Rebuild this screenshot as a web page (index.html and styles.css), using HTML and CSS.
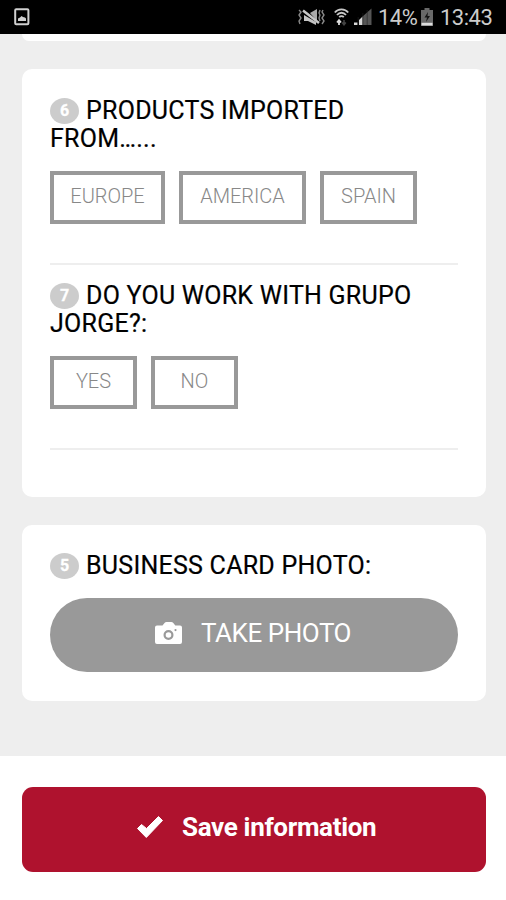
FILE: index.html
```html
<!DOCTYPE html>
<html lang="en">
<head>
    <meta charset="UTF-8">
    <meta name="viewport" content="width=device-width, initial-scale=1.0">
    <title>Questionnaire</title>
    <link rel="stylesheet" href="styles.css">
</head>
<body>
    <header class="status-bar">
        <svg class="icon-picture" width="16" height="18" viewBox="0 0 16 18">
            <rect x="1.2" y="1.2" width="13.2" height="15" rx="1" fill="none" stroke="#d0d0d0" stroke-width="2"/>
            <path d="M4 13V10.500l2-1 1.500-1.500L9 9l2 .5 1 1V13z" fill="#d0d0d0"/>
        </svg>
        <div class="status-right">
            <svg class="icon-mute" width="27" height="18" viewBox="0 0 27 18">
                <path d="M12 5l7-4v12z" fill="#aaa"/>
                <path d="M6 7v6h4l8 4v-3z" fill="#c4c4c4"/>
                <path d="M5 2.500l16 12.500" stroke="#c8c8c8" stroke-width="2.500"/>
                <path d="M1 2l2 2-2 3 2 3-2 3 1 3M22 2l-1 3 1 2-1 3 1 3M25 2l-1 2 2 3-2 3 2 3-2 3" fill="none" stroke="#888" stroke-width="1.400"/>
            </svg>
            <svg class="icon-wifi" width="15" height="18" viewBox="0 0 15 18">
                <path d="M.8 4.500C4 .3 11 .3 14.200 4.500M3 7c2.500-3 6.500-3 9 0M5.200 9.200c1.400-1.500 3.200-1.500 4.600 0" fill="none" stroke="#c8c8c8" stroke-width="1.800"/>
                <path d="M5 12v5M3 14.500L5 12.200l2 2.300" fill="none" stroke="#ddd" stroke-width="1.800"/>
                <path d="M10 12v5M8.200 14.500l1.800 2.300 1.800-2.300" fill="none" stroke="#444" stroke-width="1.500"/>
            </svg>
            <svg class="icon-signal" width="18" height="17" viewBox="0 0 18 17">
                <path d="M8.500 8.500L17.500.5V17h-9z" fill="#555"/>
                <path d="M0 17v-2.500h3.500V17zM5 17v-5l3.500-3.500V17z" fill="#d8d8d8"/>
                <path d="M4.200 9v8M8.900 5v12M13.200 2v15" stroke="#222" stroke-width=".6"/>
            </svg>
            <span class="percent">14%</span>
            <svg class="icon-battery" width="12" height="18" viewBox="0 0 12 18">
                <path d="M3.500 0h5v2H12v16H0V2h3.500z" fill="#696969"/>
                <path d="M7 4L3.500 9.500H6L5 14l4-6H6.500z" fill="#151515"/>
                <path d="M.5 14.800h11v2.700H.5z" fill="#ddd"/>
            </svg>
            <span class="clock">13:43</span>
        </div>
    </header>

    <main class="form">
        <div class="card card-previous"></div>

        <section class="card card-questions">
            <div class="question">
                <h2 class="title"><span class="number">6</span>PRODUCTS IMPORTED<br>FROM…...</h2>
                <div class="options">
                    <button class="option europe">EUROPE</button>
                    <button class="option america">AMERICA</button>
                    <button class="option spain">SPAIN</button>
                </div>
            </div>
            <div class="question">
                <h2 class="title"><span class="number">7</span>DO YOU WORK WITH GRUPO<br>JORGE?:</h2>
                <div class="options">
                    <button class="option yes">YES</button>
                    <button class="option no">NO</button>
                </div>
            </div>
        </section>

        <section class="card card-photo">
            <h2 class="title"><span class="number">5</span>BUSINESS CARD PHOTO:</h2>
            <button class="take-photo">
                <svg class="icon-camera" width="27" height="22" viewBox="0 0 27 22">
                    <path fill="#fff" fill-rule="evenodd" d="M2 3.500h5.500L9.500 1Q10.300 0 11.500 0h4.800q1.200 0 2 1l2 2.500H25q2 0 2 2V20q0 2-2 2H2q-2 0-2-2V5.500q0-2 2-2zM13.500 8a5 5 0 1 0 0 10 5 5 0 0 0 0-10zm0 2.200a2.800 2.800 0 1 1 0 5.600 2.800 2.800 0 0 1 0-5.600zM20.500 7a1.100 1.100 0 1 0 0 2.200 1.100 1.100 0 0 0 0-2.200z"/>
                </svg>
                <span>TAKE PHOTO</span>
            </button>
        </section>
    </main>

    <footer class="actions">
        <button class="save">
            <svg class="icon-check" width="26" height="22" viewBox="0 0 26 22">
                <path d="M.5 12.500L4.500 8.500l5 4L21.500.5l4 4L9.300 21.500z" fill="#fff" stroke="#fff" stroke-linejoin="round"/>
            </svg>
            <span>Save information</span>
        </button>
    </footer>
</body>
</html>
```
FILE: styles.css
```css
* {
    box-sizing: border-box;
}
body {
    margin: 0;
    background: #fff;
    font-family: Roboto, "Liberation Sans", sans-serif;
}
button {
    font-family: inherit;
    padding: 0;
}
svg {
    display: block;
    flex: none;
}
.status-bar {
    height: 34px;
    padding: 0 14px;
    background: #000;
    color: #ccc;
    display: flex;
    justify-content: space-between;
}
.icon-picture {
    margin-top: 8px;
}
.status-right {
    display: flex;
    align-items: flex-start;
    font-size: 22px;
    line-height: 35px;
}
.icon-mute {
    margin: 8px 9px 0 0;
}
.icon-wifi {
    margin: 8px 5px 0 0;
}
.icon-signal {
    margin: 8px 6px 0 0;
}
.icon-battery {
    margin: 8px 7px 0 5px;
}
.percent {
    width: 38px;
    white-space: nowrap;
    letter-spacing: -0.5px;
}
.clock {
    width: 52px;
    white-space: nowrap;
    letter-spacing: -0.5px;
}
.form {
    height: 722px;
    padding: 0 20px 0 22px;
    background: #eee;
}
.card {
    background: #fff;
    border-radius: 10px;
    padding: 27px 28px 0;
}
.card-previous {
    height: 7px;
    padding: 0;
    border-radius: 0 0 10px 10px;
    margin-bottom: 28px;
}
.card-questions {
    height: 428px;
    margin-bottom: 28px;
}
.card-photo {
    height: 176px;
    padding-top: 26px;
}
.question {
    height: 169px;
    border-bottom: 2px solid #eee;
    margin-bottom: 16px;
}
.title {
    margin: 0;
    padding-top: 1px;
    font-size: 25px;
    font-weight: 400;
    line-height: 28px;
    letter-spacing: 0.25px;
    color: #000;
    white-space: nowrap;
    -webkit-text-stroke: 0.2px #000;
}
.number {
    display: inline-block;
    width: 29px;
    height: 26px;
    margin-right: 7px;
    border-radius: 50%;
    background: #ccc;
    color: #fff;
    font-size: 16px;
    font-weight: 700;
    line-height: 26px;
    letter-spacing: 0;
    text-align: center;
    vertical-align: 3px;
    -webkit-text-stroke: 0.3px #fff;
}
.options {
    display: flex;
    gap: 14px;
    margin-top: 18px;
}
.option {
    height: 53px;
    border: 4px solid #999;
    background: #fff;
    color: #888;
    font-size: 20px;
    font-weight: 300;
    line-height: 42px;
    padding-bottom: 3px;
}
.europe {
    width: 115px;
}
.america {
    width: 127px;
}
.spain {
    width: 97px;
}
.yes, .no {
    width: 87px;
}
.take-photo {
    display: flex;
    width: 100%;
    height: 74px;
    margin-top: 18px;
    padding: 0 0 5px 105px;
    align-items: center;
    gap: 19px;
    border: 0;
    border-radius: 37px;
    background: #999;
    color: #fff;
    font-size: 26px;
    letter-spacing: -0.45px;
    white-space: nowrap;
}
.actions {
    height: 144px;
    padding: 31px 20px 0 22px;
}
.save {
    display: flex;
    width: 100%;
    height: 85px;
    padding: 0 0 5px 115px;
    align-items: center;
    gap: 19px;
    border: 0;
    border-radius: 11px;
    background: #af122e;
    color: #fff;
    font-size: 26px;
    font-weight: 700;
    letter-spacing: -0.33px;
    white-space: nowrap;
}
```
